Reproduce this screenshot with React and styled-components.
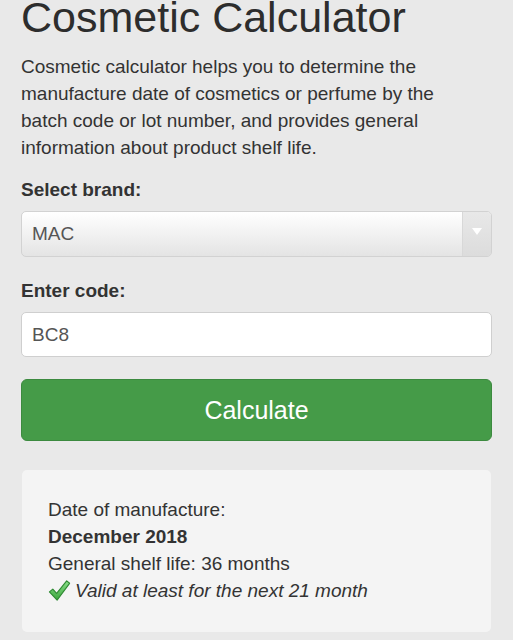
import React from 'react';
import styled, { createGlobalStyle } from 'styled-components';

const GlobalStyle = createGlobalStyle`
  html, body {
    margin: 0;
    padding: 0;
    background: #e9e9e9;
  }
  body {
    font-family: "Liberation Sans", Arial, Helvetica, sans-serif;
    color: #333;
  }
`;

const Page = styled.div`
  padding: 0 21px 20px 21px;
`;

const Title = styled.h1`
  margin: 0;
  font-size: 43px;
  line-height: 34px;
  font-weight: 400;
  color: #2d2d2d;
`;

const Intro = styled.p`
  margin: 19px 0 0;
  max-width: 450px;
  font-size: 19px;
  line-height: 27px;
`;

const Label = styled.div`
  margin-top: ${(p) => p.$top}px;
  font-size: 19px;
  line-height: 27px;
  font-weight: 700;
`;

const SelectBox = styled.div`
  margin-top: 8px;
  height: 46px;
  display: flex;
  align-items: stretch;
  border: 1px solid #d2d2d2;
  border-radius: 5px;
  background: linear-gradient(#ffffff, #e4e4e4);
  box-sizing: border-box;
  overflow: hidden;
`;

const SelectValue = styled.div`
  flex: 1;
  display: flex;
  align-items: center;
  padding-left: 10px;
  font-size: 19px;
  color: #555;
`;

const Arrow = styled.div`
  width: 28px;
  display: flex;
  align-items: center;
  justify-content: center;
  background: linear-gradient(#e8e8e8, #dcdcdc);
  border-left: 1px solid #d8d8d8;

  &::after {
    content: '';
    border-left: 5px solid transparent;
    border-right: 5px solid transparent;
    border-top: 7px solid #fff;
    margin-top: -6px;
  }
`;

const Input = styled.div`
  margin-top: 8px;
  height: 45px;
  display: flex;
  align-items: center;
  padding-left: 10px;
  border: 1px solid #cfcfcf;
  border-radius: 5px;
  background: #fff;
  box-sizing: border-box;
  font-size: 19px;
  color: #555;
`;

const Button = styled.button`
  margin-top: 22px;
  width: 100%;
  height: 62px;
  border: 1px solid #3c8a3f;
  border-radius: 6px;
  background: #459b48;
  color: #fff;
  font-family: inherit;
  font-size: 25px;
  cursor: pointer;
`;

const Result = styled.div`
  margin: 29px 1px 0;
  padding: 26px 26px 28px;
  background: #f4f4f4;
  border-radius: 5px;
  font-size: 19px;
  line-height: 27px;
`;

const Strong = styled.div`
  font-weight: 700;
`;

const Valid = styled.div`
  display: flex;
  align-items: center;
  gap: 4px;
  font-style: italic;
`;

const Check = () => (
  <svg width="23" height="23" viewBox="0 0 24 24">
    <defs>
      <linearGradient id="ck" x1="0" y1="0" x2="0" y2="1">
        <stop offset="0" stopColor="#8be08a" />
        <stop offset="1" stopColor="#3aa53c" />
      </linearGradient>
    </defs>
    <path
      d="M1.5 13.5 L5 10.5 L9 15 L19.5 2 L22.5 4.5 L9.5 22 Z"
      fill="url(#ck)"
      stroke="#2f8a33"
      strokeWidth="1.2"
      strokeLinejoin="round"
    />
  </svg>
);

export default function App() {
  return (
    <>
      <GlobalStyle />
      <Page>
        <Title>Cosmetic Calculator</Title>
        <Intro>
          Cosmetic calculator helps you to determine the manufacture date of cosmetics or perfume by the
          batch code or lot number, and provides general information about product shelf life.
        </Intro>
        <Label $top={15}>Select brand:</Label>
        <SelectBox>
          <SelectValue>MAC</SelectValue>
          <Arrow />
        </SelectBox>
        <Label $top={20}>Enter code:</Label>
        <Input>BC8</Input>
        <Button>Calculate</Button>
        <Result>
          <div>Date of manufacture:</div>
          <Strong>December 2018</Strong>
          <div>General shelf life: 36 months</div>
          <Valid>
            <Check />
            Valid at least for the next 21 month
          </Valid>
        </Result>
      </Page>
    </>
  );
}
